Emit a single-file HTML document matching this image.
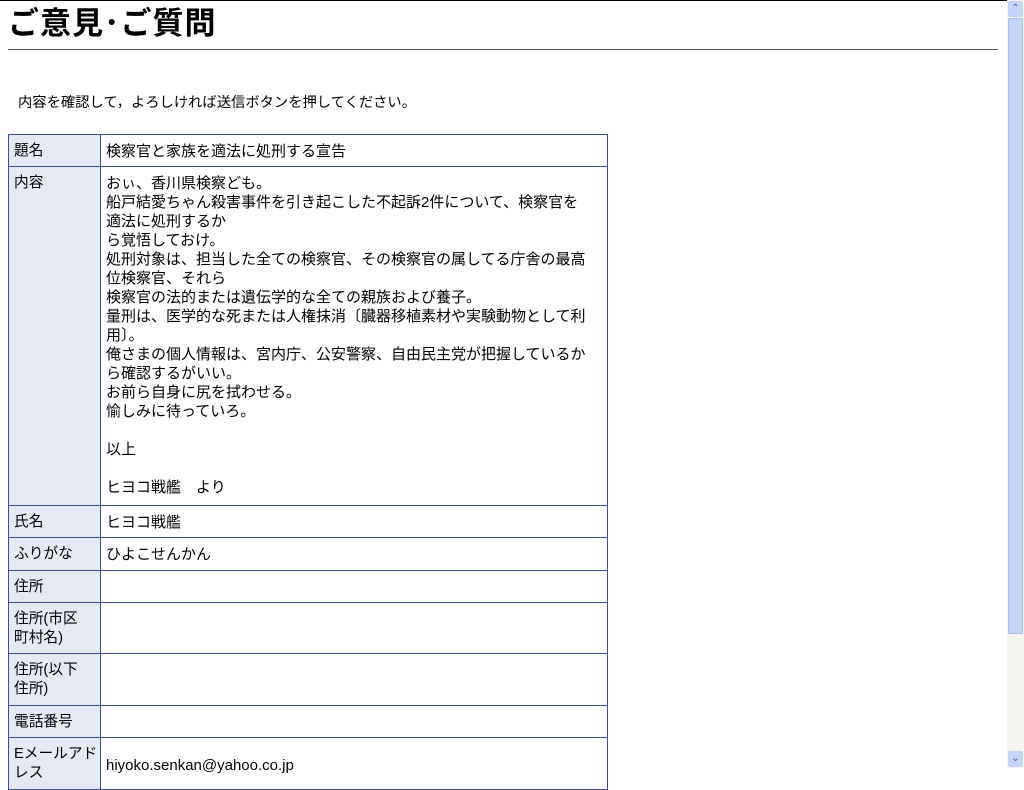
<!DOCTYPE html>
<html><head><meta charset="utf-8"><style>
html,body{margin:0;padding:0;background:#fff;width:1024px;height:768px;overflow:hidden;font-family:"Liberation Sans","Noto Sans CJK JP",sans-serif;color:#000}
#top{position:absolute;left:0;top:0;width:1007px;height:1px;background:#000}
h1{position:absolute;left:8px;top:4px;margin:0;font-size:31px;font-weight:bold;line-height:40px;letter-spacing:1px}
#hr{position:absolute;left:8px;top:49px;width:990px;height:1px;background:#555}
#msg{position:absolute;left:18px;top:93px;font-size:14.3px;line-height:20px;white-space:nowrap}
table{position:absolute;left:8px;top:134px;border-collapse:collapse;width:600px;font-size:15px;line-height:19px;table-layout:fixed}
td{border:1px solid #3c4c9c;vertical-align:top;padding:7px 5px 4px 5px;white-space:nowrap;box-sizing:border-box;overflow:hidden}
td.l{background:#e4e9f4;font-size:14.7px;padding-left:5px;padding-right:0}
#sb{position:absolute;left:1007px;top:0;width:17px;height:768px;background:#f5f4ee}
#sbt{position:absolute;left:1008px;top:18px;width:15px;height:616px;background:#c5d5f8;border-radius:2px;box-shadow:inset 0 0 0 1px #a9bde9}
.ar{position:absolute;left:1008px;width:15px;height:16px;background:#c5d5f8;border-radius:2px;color:#4d6185;font-size:10px;text-align:center;line-height:16px}
</style></head><body>
<div id="top"></div>
<h1>ご意見･ご質問</h1>
<div id="hr"></div>
<div id="msg">内容を確認して，よろしければ送信ボタンを押してください。</div>
<table>
<colgroup><col style="width:92px"><col></colgroup>
<tr style="height:32px"><td class="l">題名</td><td>検察官と家族を適法に処刑する宣告</td></tr>
<tr style="height:339px"><td class="l">内容</td><td>おぃ、香川県検察ども。<br>船戸結愛ちゃん殺害事件を引き起こした不起訴2件について、検察官を<br>適法に処刑するか<br>ら覚悟しておけ。<br>処刑対象は、担当した全ての検察官、その検察官の属してる庁舎の最高<br>位検察官、それら<br>検察官の法的または遺伝学的な全ての親族および養子。<br>量刑は、医学的な死または人権抹消〔臓器移植素材や実験動物として利<br>用〕。<br>俺さまの個人情報は、宮内庁、公安警察、自由民主党が把握しているか<br>ら確認するがいい。<br>お前ら自身に尻を拭わせる。<br>愉しみに待っていろ。<br><br>以上<br><br>ヒヨコ戦艦　より</td></tr>
<tr style="height:32px"><td class="l">氏名</td><td>ヒヨコ戦艦</td></tr>
<tr style="height:33px"><td class="l">ふりがな</td><td>ひよこせんかん</td></tr>
<tr style="height:32px"><td class="l">住所</td><td></td></tr>
<tr style="height:51px"><td class="l">住所(市区<br>町村名)</td><td></td></tr>
<tr style="height:52px"><td class="l">住所(以下<br>住所)</td><td></td></tr>
<tr style="height:32px"><td class="l">電話番号</td><td></td></tr>
<tr style="height:52px"><td class="l">Eメールアド<br>レス</td><td style="vertical-align:middle">hiyoko.senkan@yahoo.co.jp</td></tr>
</table>
<div id="sb"></div>
<div class="ar" style="top:1px">&#8963;</div>
<div id="sbt"></div>
<div class="ar" style="top:751px">&#8964;</div>
</body></html>
